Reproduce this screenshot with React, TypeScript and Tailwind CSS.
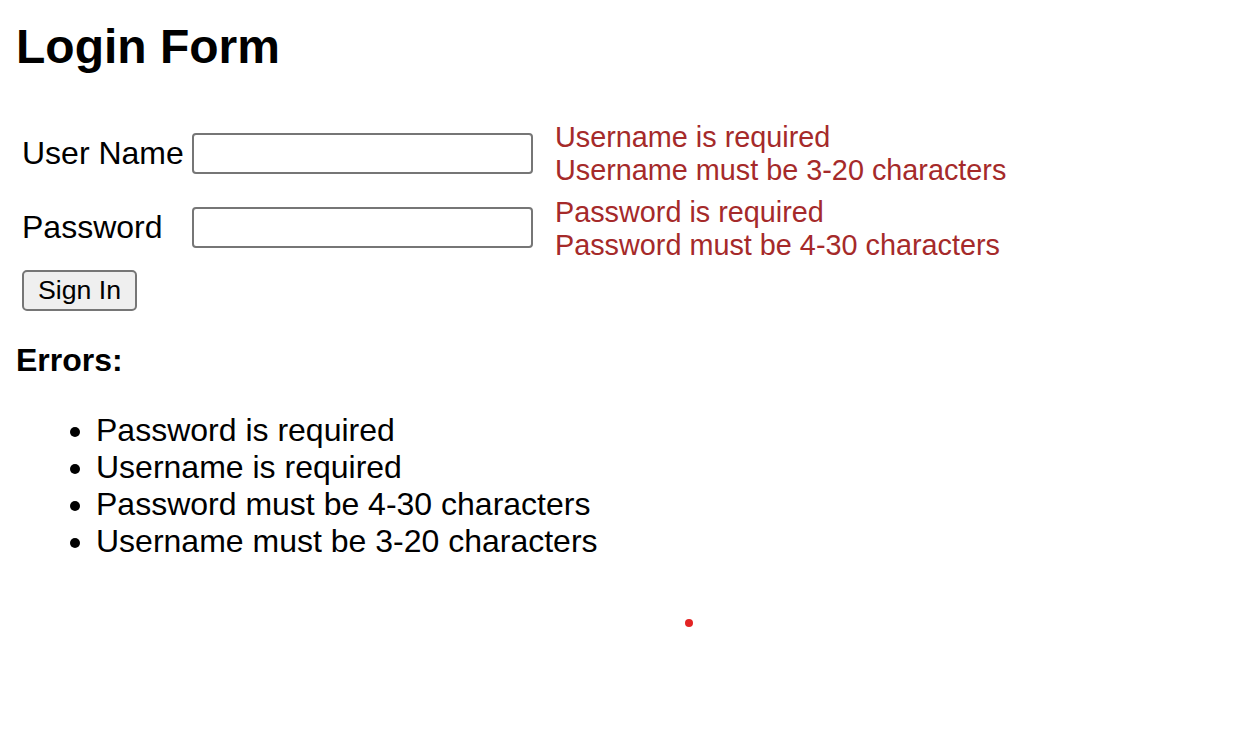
import React from "react";

export default function App() {
  return (
    <div
      className="relative w-full h-[734px] bg-white text-black pl-[16px] pt-[19px]"
      style={{ fontFamily: '"Liberation Sans", Arial, sans-serif' }}
    >
      <h2 className="text-[48px] leading-[55px] font-bold">Login Form</h2>

      <div className="mt-[44px] flex items-start">
        <label className="w-[176px] pl-[6px] mt-[17px] text-[32px] leading-[37px]">User Name</label>
        <input
          type="text"
          className="mt-[15px] w-[341px] h-[41px] border-2 border-[#767676] rounded-[4px] bg-white outline-none"
        />
        <div className="ml-[22px] mt-[3px] text-[28.8px] leading-[33px] text-[#a52a2a]">
          <div>Username is required</div>
          <div>Username must be 3-20 characters</div>
        </div>
      </div>

      <div className="mt-[6px] flex items-start">
        <label className="w-[176px] pl-[6px] mt-[16px] text-[32px] leading-[37px]">Password</label>
        <input
          type="password"
          className="mt-[14px] w-[341px] h-[41px] border-2 border-[#767676] rounded-[4px] bg-white outline-none"
        />
        <div className="ml-[22px] mt-[3px] text-[28.8px] leading-[33px] text-[#a52a2a]">
          <div>Password is required</div>
          <div>Password must be 4-30 characters</div>
        </div>
      </div>

      <button
        type="button"
        className="mt-[8px] ml-[6px] w-[115px] h-[41px] border-2 border-[#767676] rounded-[5px] bg-[#efefef] text-[26.67px] leading-[31px] text-black flex items-center justify-center"
      >
        Sign In
      </button>

      <div className="mt-[31px] text-[32px] leading-[37px] font-bold">Errors:</div>

      <ul className="mt-[33px] list-disc pl-[80px] text-[32px] leading-[37px]">
        <li>Password is required</li>
        <li>Username is required</li>
        <li>Password must be 4-30 characters</li>
        <li>Username must be 3-20 characters</li>
      </ul>

      <div className="absolute left-[685px] top-[619px] w-[8px] h-[8px] rounded-full bg-[#e32424]" />
    </div>
  );
}
